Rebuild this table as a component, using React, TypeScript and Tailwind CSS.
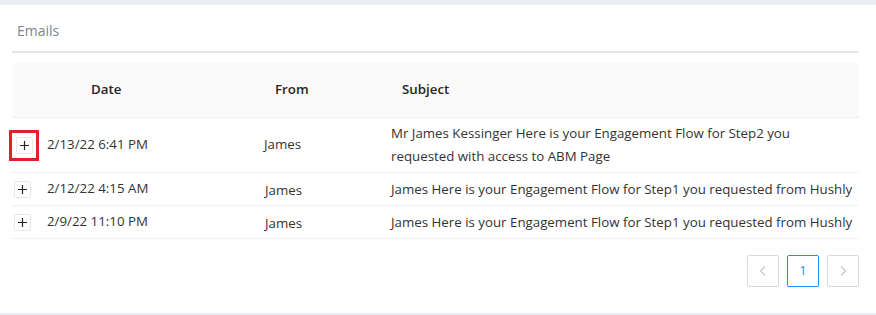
import React from 'react';

interface Email {
  date: string;
  from: string;
  subject: string;
  tall?: boolean;
}

const emails: Email[] = [
  {
    date: '2/13/22 6:41 PM',
    from: 'James',
    subject: 'Mr James Kessinger Here is your Engagement Flow for Step2 you requested with access to ABM Page',
    tall: true,
  },
  {
    date: '2/12/22 4:15 AM',
    from: 'James',
    subject: 'James Here is your Engagement Flow for Step1 you requested from Hushly',
  },
  {
    date: '2/9/22 11:10 PM',
    from: 'James',
    subject: 'James Here is your Engagement Flow for Step1 you requested from Hushly',
  },
];

const ExpandButton: React.FC<{ highlight?: boolean }> = ({ highlight }) => (
  <div
    className={
      highlight
        ? 'relative -ml-[3px] flex h-[31px] w-[30px] shrink-0 items-center justify-center border-[3px] border-[#e3202a]'
        : 'ml-[2px] flex h-[17px] w-[17px] shrink-0 items-center justify-center'
    }
  >
    <div className="flex h-[17px] w-[17px] items-center justify-center rounded-[2px] border border-[#e8e8e8] bg-white">
      <svg width="11" height="11" viewBox="0 0 11 11">
        <path d="M5.5 1v9M1 5.5h9" stroke="#262626" strokeWidth="1.2" />
      </svg>
    </div>
  </div>
);

export default function App() {
  return (
    <div className="h-[315px] w-[876px] bg-white font-['Open_Sans',sans-serif] text-[13.3px] text-[#333]">
      <div className="h-[5px] bg-[#e9ecf0]" />
      <div className="pl-[12px] pr-[17px]">
        <div className="flex h-[46px] items-end pb-[10px] pl-[5px] text-[14px] text-[#7d8590]">Emails</div>
        <div className="h-[2px] bg-[#e3e6ea]" />

        <div className="mt-[10px]">
          <div className="flex h-[55px] items-center rounded-t-[2px] border-b border-[#f0f0f0] bg-[#fafafa] font-semibold text-[#262626]">
            <div className="w-[79px]" />
            <div className="w-[184px]">Date</div>
            <div className="w-[127px]">From</div>
            <div>Subject</div>
          </div>

          {emails.map((e, i) => (
            <div
              key={i}
              className={`flex items-center border-b border-[#f0f0f0] ${e.tall ? 'h-[55px]' : 'h-[33px]'}`}
            >
              <div className="flex w-[35px] shrink-0 items-center">
                <ExpandButton highlight={i === 0} />
              </div>
              <div className="w-[217px] shrink-0">{e.date}</div>
              <div className={`w-[127px] shrink-0 ${i === 0 ? '' : 'pt-[4px] pl-[1px]'}`}>{e.from}</div>
              <div className={`min-w-0 flex-1 leading-[23px] ${e.tall ? 'max-w-[440px]' : 'whitespace-nowrap'}`}>
                {e.subject}
              </div>
            </div>
          ))}
        </div>

        <div className="mt-[16px] flex justify-end gap-[8px]">
          <button className="flex h-[32px] w-[32px] items-center justify-center rounded-[2px] border border-[#d9d9d9] bg-white">
            <svg width="10" height="12" viewBox="0 0 10 12">
              <path d="M7 1.5 2.5 6 7 10.5" fill="none" stroke="#c4c4c4" strokeWidth="1.2" />
            </svg>
          </button>
          <button className="flex h-[32px] w-[32px] items-center justify-center rounded-[2px] border border-[#1890ff] bg-white text-[13px] text-[#1890ff]">
            1
          </button>
          <button className="flex h-[32px] w-[32px] items-center justify-center rounded-[2px] border border-[#d9d9d9] bg-white">
            <svg width="10" height="12" viewBox="0 0 10 12">
              <path d="M3 1.5 7.5 6 3 10.5" fill="none" stroke="#c4c4c4" strokeWidth="1.2" />
            </svg>
          </button>
        </div>
      </div>
      <div className="mt-[26px] h-[2px] bg-[#e9edf2]" />
    </div>
  );
}
